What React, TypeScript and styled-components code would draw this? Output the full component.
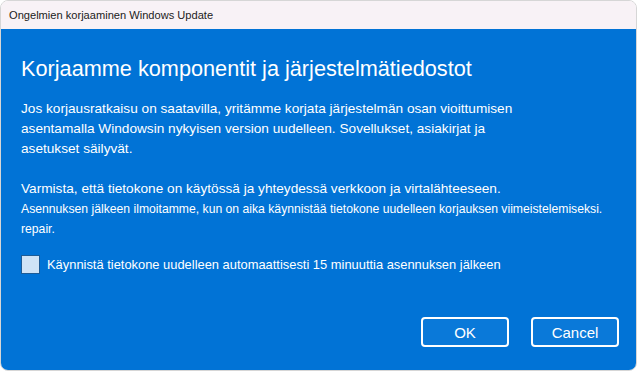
import React, { useState } from 'react';
import styled, { createGlobalStyle } from 'styled-components';

const GlobalStyle = createGlobalStyle`
  html, body {
    margin: 0;
    padding: 0;
    background: #ffffff;
  }
  * {
    box-sizing: border-box;
  }
`;

const Window = styled.div`
  width: 637px;
  height: 371px;
  display: flex;
  flex-direction: column;
  border: 1px solid #d6d6d6;
  border-radius: 8px;
  overflow: hidden;
  font-family: 'Liberation Sans', Arial, sans-serif;
`;

const TitleBar = styled.div`
  height: 28px;
  flex: none;
  display: flex;
  align-items: center;
  padding-left: 8px;
  background: #f8f2f6;
  color: #1b1b1b;
  font-size: 11.1px;
`;

const Body = styled.div`
  flex: 1;
  display: flex;
  flex-direction: column;
  padding: 26px 17px 23px 20px;
  background: #0173d6;
  color: #ffffff;
`;

const Heading = styled.h1`
  margin: 0 0 16px;
  font-size: 21.7px;
  font-weight: 400;
  line-height: 28px;
`;

const Paragraph = styled.p<{ $last?: boolean }>`
  margin: 0 0 ${(p) => (p.$last ? '16px' : '20px')};
  font-size: 13.65px;
  line-height: 20px;
`;

const Line = styled.span<{ $small?: boolean }>`
  display: block;
  font-size: ${(p) => (p.$small ? '12.2px' : '13.65px')};
`;

const CheckRow = styled.label`
  display: flex;
  align-items: center;
  gap: 7px;
  font-size: 12.9px;
  cursor: pointer;
`;

const Box = styled.span<{ $checked: boolean }>`
  width: 19px;
  height: 19px;
  flex: none;
  border: 1px solid #1d5c97;
  background: ${(p) => (p.$checked ? '#ffffff' : '#cfe3f6')};
  display: flex;
  align-items: center;
  justify-content: center;
`;

const Footer = styled.div`
  margin-top: auto;
  display: flex;
  justify-content: flex-end;
  gap: 22px;
`;

const Button = styled.button`
  width: 88px;
  height: 30px;
  border: 2px solid #ffffff;
  border-radius: 4px;
  background: #0a79d9;
  color: #ffffff;
  font-family: inherit;
  font-size: 15px;
  cursor: pointer;
`;

export default function App() {
  const [checked, setChecked] = useState(false);

  return (
    <>
      <GlobalStyle />
      <Window>
        <TitleBar>Ongelmien korjaaminen Windows Update</TitleBar>
        <Body>
          <Heading>Korjaamme komponentit ja järjestelmätiedostot</Heading>
          <Paragraph>
            Jos korjausratkaisu on saatavilla, yritämme korjata järjestelmän osan vioittumisen
            <br />
            asentamalla Windowsin nykyisen version uudelleen. Sovellukset, asiakirjat ja
            <br />
            asetukset säilyvät.
          </Paragraph>
          <Paragraph as="div" $last>
            <Line>Varmista, että tietokone on käytössä ja yhteydessä verkkoon ja virtalähteeseen.</Line>
            <Line $small>
              Asennuksen jälkeen ilmoitamme, kun on aika käynnistää tietokone uudelleen korjauksen viimeistelemiseksi.
            </Line>
            <Line $small>repair.</Line>
          </Paragraph>
          <CheckRow onClick={() => setChecked((prev) => !prev)}>
            <Box $checked={checked}>
              {checked && (
                <svg width="12" height="12" viewBox="0 0 12 12">
                  <path d="M2 6.5l2.5 2.5L10 3" stroke="#0173d6" strokeWidth="1.6" fill="none" />
                </svg>
              )}
            </Box>
            Käynnistä tietokone uudelleen automaattisesti 15 minuuttia asennuksen jälkeen
          </CheckRow>
          <Footer>
            <Button>OK</Button>
            <Button>Cancel</Button>
          </Footer>
        </Body>
      </Window>
    </>
  );
}
